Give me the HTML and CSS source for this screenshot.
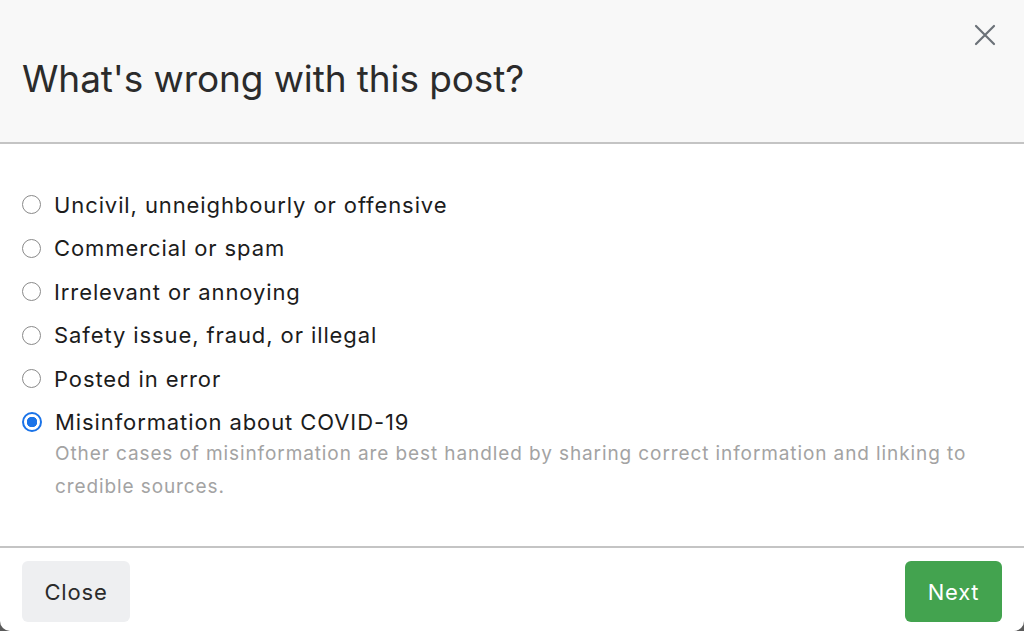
FILE: index.html
```html
<!DOCTYPE html>
<html>
  <head>
    <title>Report post</title>
    <link rel="stylesheet" href="styles.css">
  </head>
  <body>
    <div class="modal">
      <div class="modal-header">
        <h2 class="modal-title">What's wrong with this post?</h2>
        <button class="close-x" type="button" aria-label="Close">
          <svg width="22" height="22" viewBox="0 0 22 22">
            <path d="M2 2 L20 20 M20 2 L2 20" stroke="#6b7178" stroke-width="2.2" stroke-linecap="round" fill="none"/>
          </svg>
        </button>
      </div>
      <div class="modal-body">
        <label class="option"><span class="radio"></span>Uncivil, unneighbourly or offensive</label>
        <label class="option"><span class="radio"></span>Commercial or spam</label>
        <label class="option"><span class="radio"></span>Irrelevant or annoying</label>
        <label class="option"><span class="radio"></span>Safety issue, fraud, or illegal</label>
        <label class="option"><span class="radio"></span>Posted in error</label>
        <label class="option"><span class="radio checked"></span>Misinformation about COVID-19</label>
        <p class="help">Other cases of misinformation are best handled by sharing correct information and linking to credible sources.</p>
      </div>
      <div class="modal-footer">
        <button class="btn btn-light" type="button">Close</button>
        <button class="btn btn-green" type="button">Next</button>
      </div>
    </div>
  </body>
</html>
```

FILE: styles.css
```css
html, body {
  margin: 0;
  height: 100%;
}

body {
  background-color: #5a5a5a;
  font-family: Inter, 'Liberation Sans', Arial, sans-serif;
  color: #212121;
}

.modal {
  background-color: #fff;
  height: 631px;
  border-radius: 0 0 10px 10px;
  overflow: hidden;
  display: flex;
  flex-direction: column;
}

.modal-header {
  background-color: #f8f8f8;
  height: 142px;
  border-bottom: 2px solid #c4c4c4;
  flex: none;
  position: relative;
  display: flex;
  align-items: center;
  padding: 0 22px;
}

.modal-title {
  margin: 14px 0 0 0;
  font-weight: normal;
  font-size: 37px;
  letter-spacing: -0.1px;
  color: #2b2b2b;
}

.close-x {
  position: absolute;
  top: 24px;
  right: 28px;
  border: none;
  background: none;
  padding: 0;
  cursor: pointer;
}

.modal-body {
  padding: 39px 22px 0 22px;
  height: 402px;
  flex: none;
  box-sizing: border-box;
}

.option {
  display: flex;
  align-items: center;
  height: 43.5px;
  font-size: 22px;
  letter-spacing: 0.9px;
  color: #1c1c1c;
}

.radio {
  width: 17px;
  height: 17px;
  border: 1.5px solid #8a8a8a;
  border-radius: 50%;
  margin-right: 13px;
  flex: none;
}

.radio.checked {
  border: 2px solid #1a73e8;
  width: 16px;
  height: 16px;
  background: radial-gradient(circle, #1a73e8 0 5px, #fff 5.5px);
}

.help {
  margin: -7px 0 0 33px;
  font-size: 19px;
  line-height: 33px;
  letter-spacing: 0.9px;
  color: #a3a3a3;
}

.modal-footer {
  border-top: 2px solid #c4c4c4;
  display: flex;
  justify-content: space-between;
  align-items: flex-start;
  padding: 13px 22px 0 22px;
  flex: 1;
}

.btn {
  height: 61px;
  border: none;
  border-radius: 6px;
  font-family: Inter, 'Liberation Sans', Arial, sans-serif;
  font-size: 22px;
  letter-spacing: 0.8px;
  padding: 0;
}

.btn-light {
  background-color: #eeeff1;
  color: #2b2b2b;
  width: 108px;
}

.btn-green {
  background-color: #43a34f;
  color: #fff;
  width: 97px;
}
```
